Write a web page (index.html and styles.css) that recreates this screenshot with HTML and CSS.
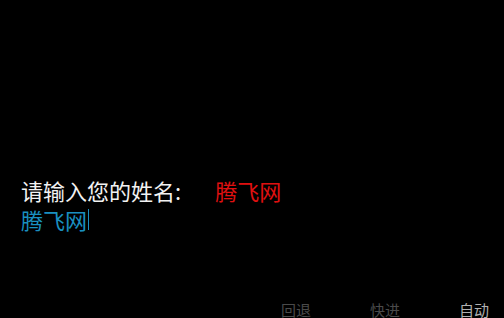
FILE: index.html
```html
<!DOCTYPE html>
<html lang="zh">
<head>
<meta charset="utf-8">
<link rel="stylesheet" href="styles.css">
</head>
<body>
<div class="screen">
  <div class="prompt">
    <div class="line">
      <span class="label">请输入您的姓名:</span>
      <span class="hint">腾飞网</span>
    </div>
    <div class="input">腾飞网<span class="caret"></span></div>
  </div>
  <nav class="quick">
    <span class="qbtn">回退</span>
    <span class="qbtn">快进</span>
    <span class="qbtn on">自动</span>
  </nav>
</div>
</body>
</html>
```
FILE: styles.css
```css
html, body {
  margin: 0;
  padding: 0;
  background: #000;
  width: 504px;
  height: 318px;
  overflow: hidden;
}
.screen {
  width: 504px;
  height: 318px;
  display: flex;
  flex-direction: column;
  font-family: "Noto Sans CJK SC", "DejaVu Sans", sans-serif;
}
.prompt {
  padding: 176px 0 0 21px;
  flex: 1;
}
.line {
  display: flex;
  align-items: baseline;
  font-size: 22px;
  line-height: 29px;
  height: 29px;
}
.label {
  color: #f2f2f2;
}
.hint {
  color: #e01010;
  margin-left: 34px;
}
.input {
  font-size: 22px;
  line-height: 28px;
  color: #1a90c0;
  display: flex;
  align-items: center;
}
.caret {
  display: inline-block;
  width: 1px;
  height: 21px;
  background: #1a90c0;
  margin-left: 1px;
}
.quick {
  display: flex;
  justify-content: flex-end;
  gap: 59px;
  padding-right: 15px;
  font-size: 15px;
  line-height: 17px;
  height: 17px;
  margin-bottom: 0;
}
.qbtn {
  color: #4a4a4a;
}
.qbtn.on {
  color: #b0b0b0;
}
```
